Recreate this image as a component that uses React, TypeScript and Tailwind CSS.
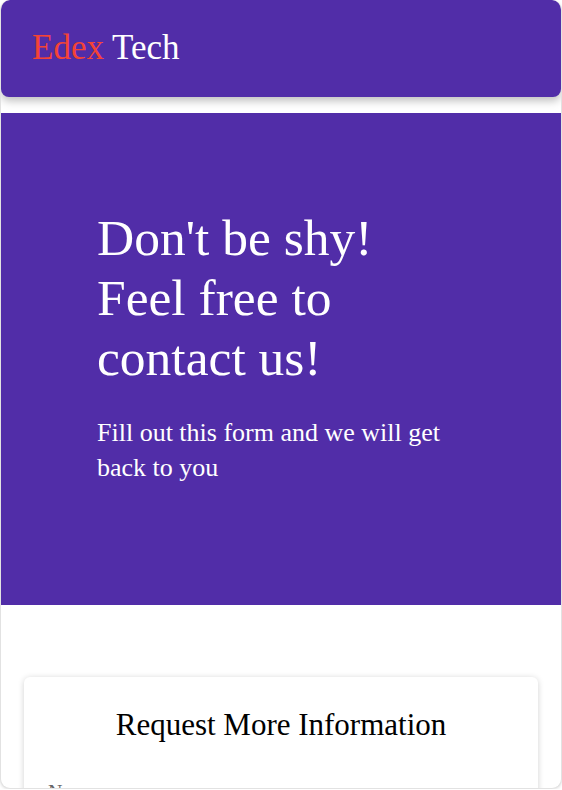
const serif = { fontFamily: '"Liberation Serif", "Times New Roman", serif' };

const Header: React.FC = () => (
  <header className="h-[97px] flex items-center pl-[31px] pr-8 pb-[3px] bg-[#512da8] rounded-lg shadow-[0_4px_8px_rgba(0,0,0,0.25)]">
    <h1 className="text-[35px] leading-none">
      <span className="text-[#f44336]">Edex</span> <span className="text-white">Tech</span>
    </h1>
  </header>
);

const Hero: React.FC = () => (
  <section className="mt-4 bg-[#512da8] pt-[95px] pb-[120px] px-[96px]">
    <div className="max-w-[360px] text-white">
      <h2 className="text-[51.5px] leading-[60px]">Don't be shy! Feel free to contact us!</h2>
      <p className="mt-[27px] text-[26px] leading-[35px]">Fill out this form and we will get back to you</p>
    </div>
  </section>
);

const RequestForm: React.FC = () => (
  <div className="mt-[72px] mx-[23px] bg-white rounded-md shadow-[0_1px_6px_rgba(0,0,0,0.18)] pt-[31px] px-6 pb-6">
    <h3 className="text-center text-[31px] leading-[34px] text-black">Request More Information</h3>
    <div className="mt-[35px]">
      <label className="block text-[20px] text-[#666666]">Name</label>
      <input className="mt-2 w-full border-b border-gray-400 outline-none text-[18px]" />
    </div>
  </div>
);

export default function App() {
  return (
    <div style={serif} className="bg-white">
      <div className="h-[789px] overflow-hidden rounded-[10px] border border-t-0 border-[#e2e2e2] shadow-[0_1px_3px_rgba(0,0,0,0.12)] bg-white">
        <Header />
        <Hero />
        <RequestForm />
      </div>
    </div>
  );
}
